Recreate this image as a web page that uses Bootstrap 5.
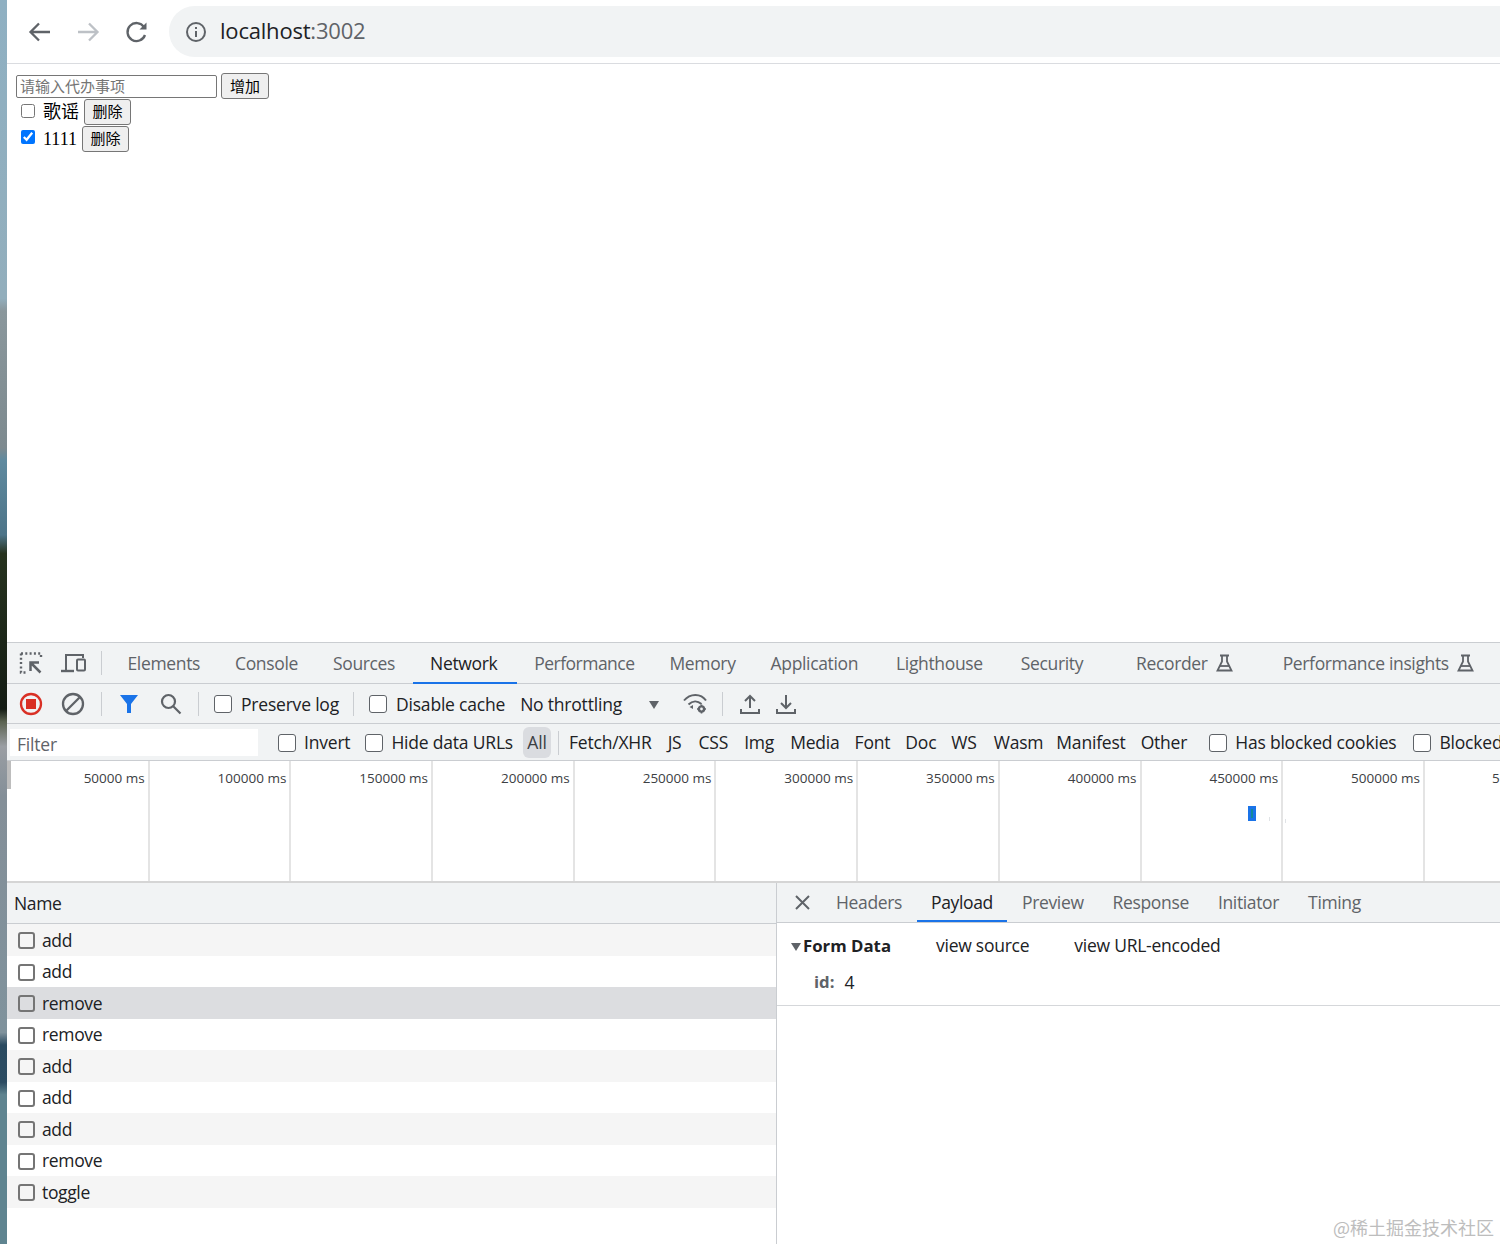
<!DOCTYPE html>
<html lang="zh-CN">
<head>
  <meta charset="UTF-8" />
  <meta name="viewport" content="width=device-width, initial-scale=1.0"/>
  <title>localhost:3002</title>
  <link href="https://cdn.jsdelivr.net/npm/bootstrap@5.3.0/dist/css/bootstrap.min.css" rel="stylesheet">
  <style>
    html, body { height: 1244px; overflow: hidden; background: #fff; }
    body { font-family: "Open Sans", "Noto Sans CJK SC", sans-serif; font-size: 17.5px; letter-spacing: -.2px; color: #202124; }
    .shot { height: 1244px; position: relative; }
    .wallpaper { width: 7px; flex: none; background: linear-gradient(#8fb0c2 0, #92aebc 24%, #8a979c 25%, #7d8a8f 36%, #5f8a9f 37%, #4d7488 43%, #27331f 44.500%, #141c14 57%, #5a6250 58%, #9a9ea3 60%, #848f98 64%, #7f929c 83%, #2a4a60 84%, #2c4c62 87%, #5f8490 88%, #5f8490 100%); }
    .main-col { width: 1493px; flex: none; }

    /* browser bar */
    .browser-bar { height: 64px; border-bottom: 1px solid #dadce0; padding-left: 19px; }
    .nav-ico { width: 28px; height: 28px; margin-right: 20px; flex: none; }
    .omnibox { height: 51px; margin-top: -1px; border-radius: 26px 0 0 26px; background: #f1f3f4; padding: 0 0 2px 16px; margin-right: -30px; margin-left: -1px; }
    .omni-info { margin-top: 3px; }
    .omni-host { font-size: 22px; margin-left: 13px; letter-spacing: -.2px; color: #202124; }
    .omni-port { color: #5f6368; }

    /* page under test */
    .app-page { height: 578px; padding: 9px 0 0 9px; font-family: "Liberation Serif", "Noto Sans CJK SC", serif; font-size: 18px; letter-spacing: 0; color: #000; }
    .todo-input { width: 201px; height: 23px; margin-top: 2px; padding: 0 3px 2px; border: 1px solid #767676; border-radius: 2px; font: 15px "Noto Sans CJK SC", sans-serif; }
    .todo-input::placeholder { color: #757575; }
    .todo-btn { height: 26px; padding: 0 8px 2px; border: 1px solid #767676; border-radius: 3px; background: #efefef; font: 15px "Noto Sans CJK SC", sans-serif; color: #000; margin-left: 4px; line-height: 1; }
    .todo-row { height: 27px; }
    .todo-row input { width: 14px; height: 14px; margin: 0 8px 3px 5px; accent-color: #0075ff; }
    .todo-row .todo-btn { margin-left: 5px; margin-bottom: 2px; padding: 0 7.500px 2px; }
    .todo-row:last-child input { margin-bottom: 5px; }

    /* devtools */
    .tab-bar { height: 42px; background: #f1f3f4; border-top: 1px solid #cacdd1; border-bottom: 1px solid #cacdd1; }
    .tool-bar { height: 40px; background: #f1f3f4; border-bottom: 1px solid #cacdd1; padding-top: 1px; }
    .filter-bar { height: 37px; background: #f1f3f4; border-bottom: 1px solid #cacdd1; padding-top: 1px; }
    .filter-bar > * { flex: none; }
    .filter-bar .dt-label { gap: 8px; }
    .tab-item { height: 41px; padding: 0 17.5px; display: flex; align-items: center; color: #5f6368; white-space: nowrap; letter-spacing: -.35px; }
    .tab-item.on { color: #202124; box-shadow: inset 0 -2px 0 #1a73e8; }
    .tab-net { padding-right: 19.5px; }
    .tab-perf { letter-spacing: -.53px; }
    .tab-light { margin-left: 3px; }
    .tab-sec { margin-left: 3px; }
    .tab-rec { margin-left: 18px; }
    .tab-ins { margin-left: 15px; }
    .dt-sep { width: 1px; height: 24px; background: #cacdd1; flex: none; }
    .dt-ico { flex: none; }
    .dt-check { appearance: none; width: 18px; height: 18px; border: 1.5px solid #5f6368; border-radius: 3px; background: #fff; flex: none; margin: 0; }
    .dt-label { display: flex; align-items: center; gap: 9px; white-space: nowrap; }

    /* spacing along the tab bar and the toolbar */
    .ico-inspect, .ico-record { margin-left: 12px; }
    .ico-device, .ico-clear { margin-left: 18px; }
    .sep-tabs { margin: 0 8px 0 15px; }
    .sep-rec { margin: 0 17px 0 16px; }
    .ico-search { margin-left: 21px; }
    .sep-search { margin: 0 15px 0 16px; }
    .sep-log { margin: 0 15px 0 14px; }
    .throttle { margin-left: 15px; }
    .throttle-arrow { margin: -5px 0 0 27px; }
    .ico-wifi { margin-left: 24px; }
    .sep-wifi { margin: 0 17px 0 13px; }
    .ico-download { margin-left: 16px; }

    .filter-box { width: 248px; height: 27px; margin-left: 3px; background: #fff; border: 0; padding: 3px 7px 0; font: inherit; letter-spacing: inherit; }
    .filter-box::placeholder { color: #5f6368; }
    .lbl-invert { margin-left: 20px; }
    .lbl-hide { margin-left: 15px; }
    .lbl-cookies { margin-left: 22px; }
    .lbl-blocked { margin-left: 17px; }
    .type-list { display: flex; align-items: center; gap: 15px; white-space: nowrap; margin-left: 10px; }
    .type-list span:nth-child(2) { margin-left: 1px; }
    .type-list span:nth-child(3) { margin-left: 2px; }
    .type-list span:nth-child(4) { margin-left: 1px; }
    .type-list span:nth-child(5) { margin-left: 1px; }
    .type-list span:nth-child(9) { margin-left: 2px; }
    .type-list span:nth-child(10) { margin-left: -2px; }
    .type-all { width: 28px; height: 31px; margin: 0 7px 0 10px; border-radius: 6px; background: #dadce0; display: flex; align-items: center; justify-content: center; color: #3c4043; }

    /* timeline overview */
    .overview { height: 122px; border-bottom: 2px solid #d5d5d5; position: relative; padding-left: 1px; }
    .tick-cell { width: 141.7px; flex: none; border-right: 2px solid #e4e4e4; padding: 7px 3px 0 0; text-align: right; font-size: 13.5px; letter-spacing: 0; color: #3c4043; white-space: nowrap; }
    .tick-last { flex: 1 1 auto; width: auto; border: 0; padding-right: 0; text-align: left; padding-left: 67px; }
    .grip { position: absolute; left: 0; top: 0; width: 4px; height: 28px; background: #bdbdbd; }
    .req-bar { position: absolute; left: 1241px; top: 45px; width: 8px; height: 15px; background: #1a73e8; }
    .req-bar::after { content: ""; display: block; width: 2px; height: 9px; margin: 0 3px; position: relative; top: 3px; background: #128a9a; }
    .req-dot { position: absolute; width: 1px; height: 4px; background: #e0e3e6; }
    .dot-a { left: 1262px; top: 56px; }
    .dot-b { left: 1278px; top: 58px; }

    /* request list + detail */
    .split { height: 361px; position: relative; }
    .req-pane { width: 769px; flex: none; border-right: 1px solid #cacdd1; box-sizing: content-box; letter-spacing: -.35px; }
    .name-head { height: 41px; background: #f1f3f4; border-bottom: 1px solid #cacdd1; padding-left: 7px; }
    .req-row { height: 31.5px; padding-left: 10.5px; gap: 7.5px; }
    .req-row:nth-child(odd) { background: #f5f5f5; }
    .req-row.picked { background: #dcdde0; }
    .req-row .dt-check { width: 17px; height: 17px; border: 2px solid #757575; margin-top: 2px; background: transparent; border-radius: 3px; }
    .detail-pane { flex: 1 1 auto; }
    .detail-tabs { height: 40px; background: #f1f3f4; border-bottom: 1px solid #cacdd1; }
    .detail-tabs .tab-item { height: 39px; padding: 0 14.5px; }
    .close-x { margin: 0 11.5px 0 18px; }
    .form-head { height: 46px; padding-left: 14px; }
    .tri { width: 0; height: 0; border-left: 5.5px solid transparent; border-right: 5.5px solid transparent; border-top: 8px solid #5f6368; flex: none; margin-top: 2px; }
    .form-title { font-weight: 700; letter-spacing: 0; margin-left: 2px; width: 133px; font-size: 16.8px; }
    .form-link { margin: -2px 45px 0 0; letter-spacing: -.25px; }
    .form-row { height: 37px; padding: 0 0 10px 37px; border-bottom: 1px solid #d5d7da; }
    .form-key { font-weight: 700; color: #5f6368; margin-right: 10px; font-size: 16.8px; letter-spacing: 0; }
    .stamp { position: absolute; right: 6px; bottom: 4px; color: #bdbdbd; font: 18px "Noto Sans CJK SC", sans-serif; letter-spacing: 0; }
  </style>
</head>
<body>
<div class="shot d-flex">
  <div class="wallpaper"></div>
  <div class="main-col overflow-hidden">

    <div class="browser-bar d-flex align-items-center">
      <svg class="nav-ico" viewBox="0 0 28 28" fill="none" stroke="#5f6368" stroke-width="2.3"><path d="M24 14H5M13 5.500l-8.500 8.500 8.500 8.500"/></svg>
      <svg class="nav-ico" viewBox="0 0 28 28" fill="none" stroke="#bdc1c6" stroke-width="2.300"><path d="M4 14h19M15 5.500l8.500 8.500-8.500 8.500"/></svg>
      <svg class="nav-ico" viewBox="0 0 28 28" fill="none" stroke="#5f6368" stroke-width="2.300"><path d="M23 17a9 9 0 1 1-1-8"/><path d="M24.500 4.500v7h-7z" fill="#5f6368" stroke="none"/></svg>
      <div class="omnibox flex-grow-1 d-flex align-items-center">
        <svg class="omni-info" width="22" height="22" viewBox="0 0 22 22" fill="none" stroke="#5f6368" stroke-width="2"><circle cx="11" cy="11" r="9"/><path d="M11 10v6"/><path d="M11 6v2"/></svg>
        <span class="omni-host">localhost<span class="omni-port">:3002</span></span>
      </div>
    </div>

    <div class="app-page">
      <div class="d-flex">
        <input class="todo-input" placeholder="请输入代办事项">
        <button class="todo-btn">增加</button>
      </div>
      <div class="todo-row d-flex align-items-center"><input type="checkbox"><span>歌谣</span><button class="todo-btn">删除</button></div>
      <div class="todo-row d-flex align-items-center"><input type="checkbox" checked><span>1111</span><button class="todo-btn">删除</button></div>
    </div>

    <div class="tab-bar d-flex align-items-center">
      <svg class="dt-ico ico-inspect" width="24" height="24" viewBox="0 0 24 24" fill="none" stroke="#5f6368"><path d="M2 2.500h20v5M2 2.500v19h5" stroke-width="2.400" stroke-dasharray="2 2.300"/><path d="M21.500 21.500L12 12M11.500 20v-8.500h8.500" stroke-width="2.500"/></svg>
      <svg class="dt-ico ico-device" width="25" height="20" viewBox="0 0 25 20" fill="none" stroke="#5f6368" stroke-width="2"><path d="M5 17V2h17v3"/><path d="M0 18h13" stroke-width="2.400"/><rect x="16" y="6.500" width="8" height="11" rx="1"/></svg>
      <div class="dt-sep sep-tabs"></div>
      <div class="d-flex align-items-center">
        <div class="tab-item">Elements</div>
        <div class="tab-item">Console</div>
        <div class="tab-item">Sources</div>
        <div class="tab-item tab-net on">Network</div>
        <div class="tab-item tab-perf">Performance</div>
        <div class="tab-item">Memory</div>
        <div class="tab-item">Application</div>
        <div class="tab-item tab-light">Lighthouse</div>
        <div class="tab-item tab-sec">Security</div>
        <div class="tab-item tab-rec gap-2">Recorder
          <svg width="17" height="18" viewBox="0 0 17 18" fill="none" stroke="#5f6368" stroke-width="1.800"><path d="M4 1.500h9M6 1.500v6L1.500 16.500h14L11 7.500v-6"/><path d="M4 12h9"/></svg>
        </div>
        <div class="tab-item tab-ins gap-2">Performance insights
          <svg width="17" height="18" viewBox="0 0 17 18" fill="none" stroke="#5f6368" stroke-width="1.800"><path d="M4 1.500h9M6 1.500v6L1.500 16.500h14L11 7.500v-6"/><path d="M4 12h9"/></svg>
        </div>
      </div>
    </div>

    <div class="tool-bar d-flex align-items-center">
      <svg class="dt-ico ico-record" width="24" height="24" viewBox="0 0 24 24"><circle cx="12" cy="12" r="10" fill="none" stroke="#d93025" stroke-width="2.300"/><rect x="7" y="7" width="10" height="10" fill="#d93025"/></svg>
      <svg class="dt-ico ico-clear" width="24" height="24" viewBox="0 0 24 24" fill="none" stroke="#5f6368" stroke-width="2.300"><circle cx="12" cy="12" r="10"/><path d="M5 19L19 5"/></svg>
      <div class="dt-sep sep-rec"></div>
      <svg class="dt-ico" width="20" height="20" viewBox="0 0 20 20" fill="#1a73e8"><path d="M1 1h18l-7 9v9h-4v-9z"/></svg>
      <svg class="dt-ico ico-search" width="22" height="22" viewBox="0 0 22 22" fill="none" stroke="#5f6368" stroke-width="2.200"><circle cx="8.500" cy="8.500" r="6.500"/><path d="M13 13l7.500 7.500"/></svg>
      <div class="dt-sep sep-search"></div>
      <label class="dt-label"><input type="checkbox" class="dt-check">Preserve log</label>
      <div class="dt-sep sep-log"></div>
      <label class="dt-label"><input type="checkbox" class="dt-check">Disable cache</label>
      <span class="throttle">No throttling</span>
      <div class="tri throttle-arrow"></div>
      <svg class="dt-ico ico-wifi" width="26" height="22" viewBox="0 0 26 22" fill="none" stroke="#5f6368" stroke-width="2"><path d="M1 7.500c6-7.500 17-7.500 22 0M5.500 11.500c4-4 9-4 13-.5"/><path d="M10 12l-3.500 2 3.500 2z" fill="#5f6368" stroke="none"/><circle cx="18.500" cy="16" r="2.600" stroke-width="2.400"/><path d="M18.500 11.500v1.500M18.500 19v1.500M14 16h1.500M21.500 16h1.500" stroke-width="1.600"/></svg>
      <div class="dt-sep sep-wifi"></div>
      <svg class="dt-ico" width="20" height="22" viewBox="0 0 20 22" fill="none" stroke="#5f6368" stroke-width="2"><path d="M10 15V3M5 8l5-5 5 5M1 16v4h18v-4"/></svg>
      <svg class="dt-ico ico-download" width="20" height="22" viewBox="0 0 20 22" fill="none" stroke="#5f6368" stroke-width="2"><path d="M10 2v13M5 10l5 5 5-5M1 16v4h18v-4"/></svg>
    </div>

    <div class="filter-bar d-flex align-items-center">
      <input class="filter-box" placeholder="Filter">
      <label class="dt-label lbl-invert"><input type="checkbox" class="dt-check">Invert</label>
      <label class="dt-label lbl-hide"><input type="checkbox" class="dt-check">Hide data URLs</label>
      <div class="type-all">All</div>
      <div class="dt-sep"></div>
      <div class="type-list">
        <span>Fetch/XHR</span><span>JS</span><span>CSS</span><span>Img</span><span>Media</span><span>Font</span><span>Doc</span><span>WS</span><span>Wasm</span><span>Manifest</span><span>Other</span>
      </div>
      <label class="dt-label lbl-cookies"><input type="checkbox" class="dt-check">Has blocked cookies</label>
      <label class="dt-label lbl-blocked"><input type="checkbox" class="dt-check">Blocked</label>
    </div>

    <div class="overview d-flex">
      <div class="tick-cell">50000 ms</div>
      <div class="tick-cell">100000 ms</div>
      <div class="tick-cell">150000 ms</div>
      <div class="tick-cell">200000 ms</div>
      <div class="tick-cell">250000 ms</div>
      <div class="tick-cell">300000 ms</div>
      <div class="tick-cell">350000 ms</div>
      <div class="tick-cell">400000 ms</div>
      <div class="tick-cell">450000 ms</div>
      <div class="tick-cell">500000 ms</div>
      <div class="tick-cell tick-last">5</div>
      <div class="grip"></div>
      <div class="req-bar"></div>
      <div class="req-dot dot-a"></div>
      <div class="req-dot dot-b"></div>
    </div>

    <div class="split d-flex">
      <div class="req-pane">
        <div class="name-head d-flex align-items-center">Name</div>
        <div class="req-list">
          <div class="req-row d-flex align-items-center"><input type="checkbox" class="dt-check">add</div>
          <div class="req-row d-flex align-items-center"><input type="checkbox" class="dt-check">add</div>
          <div class="req-row picked d-flex align-items-center"><input type="checkbox" class="dt-check">remove</div>
          <div class="req-row d-flex align-items-center"><input type="checkbox" class="dt-check">remove</div>
          <div class="req-row d-flex align-items-center"><input type="checkbox" class="dt-check">add</div>
          <div class="req-row d-flex align-items-center"><input type="checkbox" class="dt-check">add</div>
          <div class="req-row d-flex align-items-center"><input type="checkbox" class="dt-check">add</div>
          <div class="req-row d-flex align-items-center"><input type="checkbox" class="dt-check">remove</div>
          <div class="req-row d-flex align-items-center"><input type="checkbox" class="dt-check">toggle</div>
        </div>
      </div>
      <div class="detail-pane">
        <div class="detail-tabs d-flex align-items-center">
          <svg class="dt-ico close-x" width="15" height="15" viewBox="0 0 15 15" stroke="#5f6368" stroke-width="2"><path d="M1 1l13 13M14 1L1 14"/></svg>
          <div class="tab-item">Headers</div>
          <div class="tab-item on">Payload</div>
          <div class="tab-item">Preview</div>
          <div class="tab-item">Response</div>
          <div class="tab-item">Initiator</div>
          <div class="tab-item">Timing</div>
        </div>
        <div class="form-head d-flex align-items-center">
          <div class="tri"></div>
          <div class="form-title">Form Data</div>
          <span class="form-link">view source</span>
          <span class="form-link">view URL-encoded</span>
        </div>
        <div class="form-row d-flex align-items-center"><span class="form-key">id:</span><span>4</span></div>
      </div>
      <div class="stamp">@稀土掘金技术社区</div>
    </div>

  </div>
</div>
<script src="https://cdn.jsdelivr.net/npm/bootstrap@5.3.0/dist/js/bootstrap.bundle.min.js"></script>
</body>
</html>
